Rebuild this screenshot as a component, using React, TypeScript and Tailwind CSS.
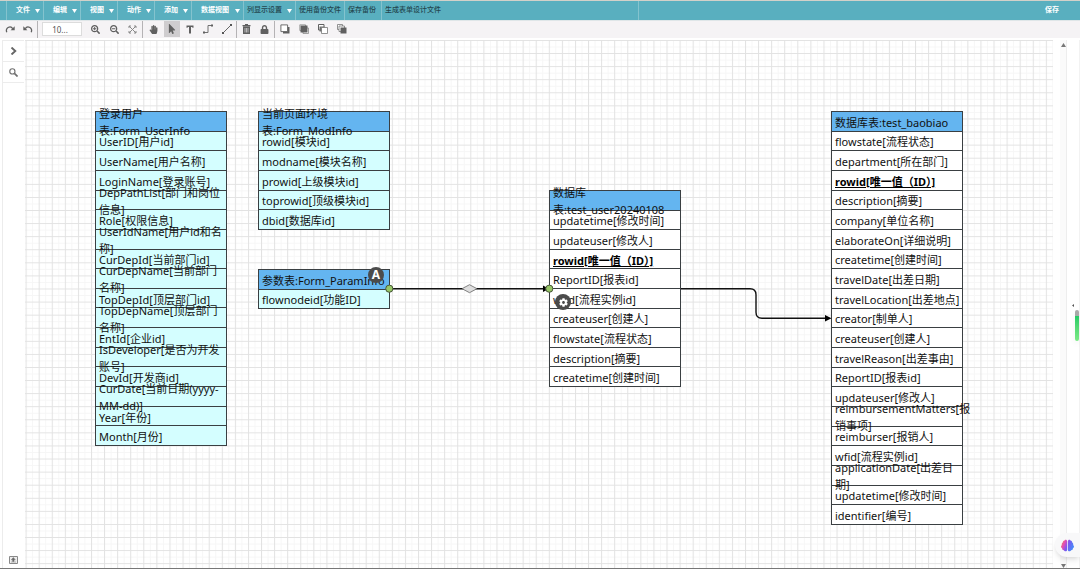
import type { ReactNode } from 'react';
import clsx from 'clsx';
import { FaBrain, FaCog, FaHandPaper, FaLock, FaMousePointer, FaSearchMinus, FaSearchPlus } from 'react-icons/fa';

type Field = string | { text: string; primary: boolean };

interface EntityProps {
  title: string;
  fields: Field[];
  className: string;
  tinted?: boolean;
}

const userInfoFields: Field[] = [
  'UserID[用户id]',
  'UserName[用户名称]',
  'LoginName[登录账号]',
  'DepPathList[部门和岗位\n信息]',
  'Role[权限信息]',
  'UserIdName[用户id和名\n称]',
  'CurDepId[当前部门id]',
  'CurDepName[当前部门\n名称]',
  'TopDepId[顶层部门id]',
  'TopDepName[顶层部门\n名称]',
  'EntId[企业id]',
  'IsDeveloper[是否为开发\n账号]',
  'DevId[开发商id]',
  'CurDate[当前日期(yyyy-\nMM-dd)]',
  'Year[年份]',
  'Month[月份]',
];

const modInfoFields: Field[] = [
  'rowid[模块id]',
  'modname[模块名称]',
  'prowid[上级模块id]',
  'toprowid[顶级模块id]',
  'dbid[数据库id]',
];

const testUserFields: Field[] = [
  'updatetime[修改时间]',
  'updateuser[修改人]',
  { text: 'rowid[唯一值（ID）]', primary: true },
  'ReportID[报表id]',
  'wfid[流程实例id]',
  'createuser[创建人]',
  'flowstate[流程状态]',
  'description[摘要]',
  'createtime[创建时间]',
];

const baobiaoFields: Field[] = [
  'flowstate[流程状态]',
  'department[所在部门]',
  { text: 'rowid[唯一值（ID）]', primary: true },
  'description[摘要]',
  'company[单位名称]',
  'elaborateOn[详细说明]',
  'createtime[创建时间]',
  'travelDate[出差日期]',
  'travelLocation[出差地点]',
  'creator[制单人]',
  'createuser[创建人]',
  'travelReason[出差事由]',
  'ReportID[报表id]',
  'updateuser[修改人]',
  'reimbursementMatters[报\n销事项]',
  'reimburser[报销人]',
  'wfid[流程实例id]',
  'applicationDate[出差日\n期]',
  'updatetime[修改时间]',
  'identifier[编号]',
];

function Caret() {
  return (
    <svg className="h-1 w-[5px] shrink-0" viewBox="0 0 5 4">
      <path d="M0 0h5L2.5 4z" fill="#fff" />
    </svg>
  );
}

function MenuItem({ label, className, caret }: { label: string; className: string; caret?: boolean }) {
  return (
    <button className={clsx('flex items-center justify-between border-l border-[#84c3ce] pr-[3px] whitespace-nowrap', className)}>
      {label}
      {caret && <Caret />}
    </button>
  );
}

function Tool({ label, active, children }: { label: string; active?: boolean; children: ReactNode }) {
  return (
    <button aria-label={label} className="flex h-4 flex-1 items-center justify-center">
      <span className={clsx('flex h-4 w-4 items-center justify-center', active && 'bg-[#cfcdcf]')}>{children}</span>
    </button>
  );
}

function RedoIcon({ flip }: { flip?: boolean }) {
  return (
    <svg className={clsx('h-[10px] w-[10px]', flip && '-scale-x-100')} viewBox="0 0 10 10" fill="none">
      <path d="M1.8 8.2A3.4 3.4 0 1 1 7.8 4.8" stroke="#606060" strokeWidth="1.3" />
      <path d="M9.7 2.2v4H5.6z" fill="#606060" />
    </svg>
  );
}

function ExpandIcon() {
  return (
    <svg className="h-[9px] w-[9px]" viewBox="0 0 9 9" fill="none" stroke="#8a8a8a">
      <path d="M1 3V1h2M6 1h2v2M8 6v2H6M3 8H1V6M1 1l7 7M8 1L1 8" />
    </svg>
  );
}

function TextIcon() {
  return (
    <svg className="h-[9px] w-[8px]" viewBox="0 0 8 9">
      <path d="M.5.5h7v2.2h-1l-.4-.8H5v6.6H3V1.900H1.900l-.4.8h-1z" fill="#606060" />
    </svg>
  );
}

function ConnectorIcon() {
  return (
    <svg className="h-[10px] w-[10px]" viewBox="0 0 10 10" fill="none" stroke="#707070">
      <path d="M2 8.500h3v-7h3" />
      <path d="M0 7.500h2v2H0zM8 .5h2v2H8z" fill="#606060" stroke="none" />
    </svg>
  );
}

function LineIcon() {
  return (
    <svg className="h-[10px] w-[10px]" viewBox="0 0 10 10">
      <path d="M1.500 8.500l7-7" stroke="#666" />
      <path d="M0 8h2v2H0zM8 0h2v2H8z" fill="#555" />
    </svg>
  );
}

function TrashIcon() {
  return (
    <svg className="h-[10px] w-[9px]" viewBox="0 0 9 10" fill="#606060">
      <path d="M3 0h3v1h2.500v1.300h-8V1H3zM1 2.600h7V10H1z" />
      <path d="M3 4v4.500M4.500 4v4.500M6 4v4.500" stroke="#f5f3f5" strokeWidth=".6" />
    </svg>
  );
}

function LayerIcon({ kind }: { kind: 'front' | 'back' | 'forward' | 'backward' }) {
  return (
    <svg className="h-[10px] w-[10px]" viewBox="0 0 10 10">
      {kind === 'front' && (
        <>
          <path d="M3 3h6.500v6.500H3z" fill="#606060" />
          <path d="M.9.900h6.700v6.700H.9z" fill="#fff" stroke="#606060" strokeWidth=".9" />
        </>
      )}
      {kind === 'back' && (
        <>
          <path d="M.8.800h5.700v5.700H.8zM4 4h5.500v5.500H4z" fill="#fff" stroke="#8a8a8a" strokeWidth=".8" />
          <path d="M1.500 1.500h7v7h-7z" fill="#606060" />
        </>
      )}
      {kind === 'forward' && (
        <>
          <path d="M.5.500h5.500v5.500H.5z" fill="#fff" stroke="#606060" />
          <path d="M1.500 2.500h5v5h-5z" fill="#707070" />
          <path d="M3.500 3.500h6v6h-6z" fill="#fff" stroke="#777" strokeWidth=".8" />
        </>
      )}
      {kind === 'backward' && (
        <>
          <path d="M.5.500h5v5h-5z" fill="#fff" stroke="#777" strokeWidth=".8" />
          <path d="M2 2h5.500v5.500H2z" fill="#fff" stroke="#777" strokeWidth=".8" />
          <path d="M3.500 3.500h6v6h-6z" fill="#606060" />
        </>
      )}
    </svg>
  );
}

function Entity({ title, fields, className, tinted }: EntityProps) {
  return (
    <ul
      className={clsx(
        'absolute grid w-[132px] auto-rows-fr grid-cols-1 border-x border-t border-[#3a3f42] text-[11px] leading-[17px] text-[#111]',
        tinted ? 'bg-[#d4feff]' : 'bg-white',
        className,
      )}
    >
      <li className="flex min-h-0 items-center border-b border-[#3a3f42] bg-[#64b5f0] pt-[2px] pl-[3px]">
        <div className="relative z-10 flex h-0 items-center whitespace-pre">{title}</div>
      </li>
      {fields.map((field) => {
        const text = typeof field === 'string' ? field : field.text;
        return (
          <li key={text} className="flex min-h-0 items-center border-b border-[#3a3f42] pt-[2px] pl-[3px]">
            <div
              className={clsx(
                'relative z-10 flex h-0 items-center whitespace-pre',
                typeof field !== 'string' && 'font-bold text-black underline',
              )}
            >
              {text}
            </div>
          </li>
        );
      })}
    </ul>
  );
}

function CanvasGrid() {
  return (
    <svg className="absolute inset-0 h-full w-full" aria-hidden="true">
      <defs>
        <pattern id="grid" x="0.6" y="0" width="13.08" height="13.08" patternUnits="userSpaceOnUse">
          <path d="M7.040 0v13.080M0 7.040h13.080" stroke="#f6f6f6" />
          <path d="M.5 0v13.080M0 .5h13.080" stroke="#e2e2e2" />
        </pattern>
      </defs>
      <rect width="100%" height="100%" fill="url(#grid)" />
    </svg>
  );
}

// Links between the entities, in canvas coordinates
function Links() {
  return (
    <svg className="absolute top-0 left-0 z-20 h-[400px] w-[900px]" viewBox="0 0 900 400" fill="none">
      <path d="M364 248.700h157M656 248.700h69q6 0 6 6v17.500q0 6 6 6h64" stroke="#111" strokeWidth="1.400" />
      <path d="M518 245.500l6 3.200-6 3.200zM800 275l6.500 3.200-6.500 3.200z" fill="#000" />
      <path d="M437 248.700l7.500-4 7.500 4-7.500 4z" fill="#dedede" stroke="#666" strokeWidth=".8" />
      <circle cx="364.300" cy="248.700" r="3.600" fill="#97c667" stroke="#48573a" />
      <circle cx="524.300" cy="248.700" r="3.600" fill="#97c667" stroke="#48573a" />
    </svg>
  );
}

export default function App() {
  return (
    <div className="flex min-h-screen flex-col overflow-hidden border-b border-[#777] bg-white font-['Noto_Sans','Noto_Sans_CJK_SC',sans-serif]">
      {/* Menu bar */}
      <header className="flex h-5 border-t border-[#d3d1c9] bg-[#59afbf] pl-[6px] text-[7px] text-[#24474f]">
        <nav className="flex font-bold text-white">
          <MenuItem label="文件" caret className="w-[37px] pl-[9px]" />
          <MenuItem label="编辑" caret className="w-[37px] pl-[9px]" />
          <MenuItem label="视图" caret className="w-[37px] pl-[9px]" />
          <MenuItem label="动作" caret className="w-[37px] pl-[9px]" />
          <MenuItem label="添加" caret className="w-[37px] pl-[9px]" />
          <MenuItem label="数据视图" caret className="w-[52px] pl-[9px]" />
        </nav>
        <nav className="flex border-r border-[#84c3ce] font-medium">
          <MenuItem label="列显示设置" caret className="w-[52px] pl-[3px]" />
          <MenuItem label="使用备份文件" className="w-[49px] pl-[3px]" />
          <MenuItem label="保存备份" className="w-[37px] pl-[3px]" />
          <MenuItem label="生成表单设计文件" className="w-[257px] pl-[3px]" />
        </nav>
        <button className="mr-[21px] ml-auto font-bold text-white">保存</button>
      </header>

      {/* Toolbar */}
      <div className="flex h-[18px] border-t border-[#dfe6e8] bg-[#f5f3f5] pl-px text-[#606060]">
        <div className="flex w-[37px] border-r border-[#b5b3b5]">
          <Tool label="重做"><RedoIcon /></Tool>
          <Tool label="撤销"><RedoIcon flip /></Tool>
        </div>
        <input
          aria-label="缩放比例"
          defaultValue="10..."
          className="mt-px ml-1 h-[14px] w-10 border border-[#dcdcdc] bg-white pr-1 text-center text-[8px] text-[#555]"
        />
        <div className="ml-1 flex w-[57px] border-r border-[#b5b3b5]">
          <Tool label="放大"><FaSearchPlus size={9} /></Tool>
          <Tool label="缩小"><FaSearchMinus size={9} /></Tool>
          <Tool label="适应窗口"><ExpandIcon /></Tool>
        </div>
        <div className="flex w-[94px] border-r border-[#b5b3b5] pl-px">
          <Tool label="平移"><FaHandPaper size={9} /></Tool>
          <Tool label="选择" active><FaMousePointer size={10} /></Tool>
          <Tool label="文本"><TextIcon /></Tool>
          <Tool label="连接线"><ConnectorIcon /></Tool>
          <Tool label="直线"><LineIcon /></Tool>
        </div>
        <div className="flex w-[38px] border-r border-[#b5b3b5]">
          <Tool label="删除"><TrashIcon /></Tool>
          <Tool label="锁定"><FaLock size={9} /></Tool>
        </div>
        <div className="flex w-[76px]">
          <Tool label="置于顶层"><LayerIcon kind="front" /></Tool>
          <Tool label="置于底层"><LayerIcon kind="back" /></Tool>
          <Tool label="上移一层"><LayerIcon kind="forward" /></Tool>
          <Tool label="下移一层"><LayerIcon kind="backward" /></Tool>
        </div>
      </div>

      <div className="flex flex-1 pt-[2px]">
        {/* Collapsed palette */}
        <aside className="ml-[2px] flex w-[22px] flex-col border-t border-l border-[#ececec]">
          <button aria-label="展开" className="flex h-[21px] items-center justify-center border-b border-[#ececec]">
            <svg className="h-2 w-[7px]" viewBox="0 0 7 8" fill="none">
              <path d="M1.500.500l3.800 3.500-3.800 3.500" stroke="#666" strokeWidth="1.900" />
            </svg>
          </button>
          <button aria-label="搜索" className="flex h-[21px] items-center justify-center border-b border-[#ececec]">
            <svg className="h-[9px] w-[9px]" viewBox="0 0 8 8" fill="none" stroke="#707070">
              <circle cx="3" cy="3" r="2.300" />
              <path d="M4.800 4.800l2.800 2.800" strokeWidth="1.500" />
            </svg>
          </button>
          <button aria-label="缩略图" className="mt-auto mb-1 flex justify-center">
            <svg className="h-2 w-[9px]" viewBox="0 0 9 8" fill="none">
              <path d="M.5.500h8v7h-8z" fill="#eee" stroke="#888" />
              <path d="M4.300 1.500l2 2.300H5v1.700H3.600V3.800H2.300zM2 6h5" fill="#666" stroke="#777" strokeWidth=".5" />
            </svg>
          </button>
        </aside>

        {/* Diagram */}
        <main className="relative ml-px flex-1">
          <CanvasGrid />
          <Entity title={'登录用户\n表:Form_UserInfo'} fields={userInfoFields} tinted className="top-[71px] left-[70px] h-[335px]" />
          <Entity title={'当前页面环境\n表:Form_ModInfo'} fields={modInfoFields} tinted className="top-[71px] left-[233px] h-[119px]" />
          <Entity title="参数表:Form_ParamInfo" fields={['flownodeid[功能ID]']} tinted className="top-[229px] left-[233px] h-[40px]" />
          <Entity title={'数据库\n表:test_user20240108'} fields={testUserFields} className="top-[150px] left-[524px] h-[197px]" />
          <Entity title="数据库表:test_baobiao" fields={baobiaoFields} className="top-[71px] left-[806px] h-[414px]" />
          <Links />
          <span className="absolute top-[227px] left-[343px] z-30 flex h-4 w-4 items-center justify-center rounded-full bg-[#4b4b4b] text-[12px] font-bold text-white">
            A
          </span>
          <span className="absolute top-[254px] left-[530px] z-30 flex h-4 w-4 items-center justify-center rounded-full bg-[#4b4b4b] text-white">
            <FaCog size={9} />
          </span>
        </main>

        {/* Scroll track */}
        <div className="ml-[7px] flex w-[7px] flex-col items-center justify-between border-r border-[#ededed] bg-[#fafafa] pt-[3px]">
          <svg className="h-1 w-[5px]" viewBox="0 0 5 4"><path d="M2.500 0L5 4H0z" fill="#777" /></svg>
          <svg className="h-1 w-[5px]" viewBox="0 0 5 4"><path d="M0 0h5L2.500 4z" fill="#777" /></svg>
        </div>
        <div className="relative w-[13px] border-r border-[#f2f2f2]">
          <svg className="absolute top-[264px] left-[5px] h-[3px] w-[2px]" viewBox="0 0 2 3"><path d="M2 0v3L0 1.500z" fill="#555" /></svg>
          <div className="absolute top-[270px] right-0 h-[31px] w-[4px] rounded-full bg-linear-to-b from-[#a9a9a9] from-20% via-[#22cc66] via-20% to-[#7bea86] shadow-md" />
          <button
            aria-label="智能助手"
            className="absolute right-[-1px] bottom-[11px] z-30 flex h-6 w-[25px] items-center justify-center rounded-l-full bg-[#f8f8f9] shadow-md"
          >
            <svg className="absolute h-0 w-0" aria-hidden="true">
              <linearGradient id="brain" x1="0" y1="0" x2="1" y2="0.4">
                <stop offset="0" stopColor="#f58a4b" />
                <stop offset="0.350" stopColor="#e04bb8" />
                <stop offset="0.600" stopColor="#7a58f0" />
                <stop offset="1" stopColor="#4a86f7" />
              </linearGradient>
            </svg>
            <FaBrain size={13} style={{ fill: 'url(#brain)' }} />
          </button>
        </div>
      </div>
    </div>
  );
}
